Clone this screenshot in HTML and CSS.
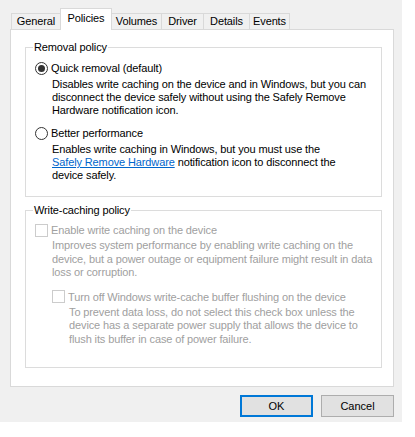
FILE: index.html
```html
<!DOCTYPE html>
<html>
<head>
<meta charset="utf-8">
<link rel="stylesheet" href="styles.css">
</head>
<body>
<div class="dialog">
  <div class="tabs">
    <div class="tab t-general">General</div>
    <div class="tab t-policies active">Policies</div>
    <div class="tab t-volumes">Volumes</div>
    <div class="tab t-driver">Driver</div>
    <div class="tab t-details">Details</div>
    <div class="tab t-events">Events</div>
  </div>
  <div class="panel">
    <fieldset class="group g-removal">
      <legend>Removal policy</legend>
      <div class="option first"><span class="radio checked"></span><span class="label">Quick removal (default)</span></div>
      <p class="desc">Disables write caching on the device and in Windows, but you can<br>disconnect the device safely without using the Safely Remove<br>Hardware notification icon.</p>
      <div class="option second"><span class="radio"></span><span class="label">Better performance</span></div>
      <p class="desc">Enables write caching in Windows, but you must use the<br><a class="link" href="#">Safely Remove Hardware</a> notification icon to disconnect the<br>device safely.</p>
    </fieldset>
    <fieldset class="group g-cache">
      <legend>Write-caching policy</legend>
      <div class="option disabled first"><span class="check"></span><span class="label">Enable write caching on the device</span></div>
      <p class="desc disabled">Improves system performance by enabling write caching on the<br>device, but a power outage or equipment failure might result in data<br>loss or corruption.</p>
      <div class="option disabled sub"><span class="check"></span><span class="label">Turn off Windows write-cache buffer flushing on the device</span></div>
      <p class="desc disabled subdesc">To prevent data loss, do not select this check box unless the<br>device has a separate power supply that allows the device to<br>flush its buffer in case of power failure.</p>
    </fieldset>
  </div>
  <div class="buttons">
    <button class="btn default">OK</button>
    <button class="btn">Cancel</button>
  </div>
</div>
</body>
</html>
```

FILE: styles.css
```css
body {
  margin: 0;
  background: #ffffff;
  font-family: "Liberation Sans", Arial, sans-serif;
  font-size: 11px;
  letter-spacing: -0.12px;
  color: #000;
}

.dialog {
  width: 402px;
  height: 422px;
  box-sizing: border-box;
  background: #f0f0f0;
  padding: 8px 8px 0 10px;
  display: flex;
  flex-direction: column;
}

.tabs {
  display: flex;
  align-items: flex-end;
  height: 22px;
  margin-bottom: -1px;
  padding-left: 1px;
  position: relative;
  z-index: 1;
}

.tab {
  box-sizing: border-box;
  height: 16px;
  line-height: 15px;
  margin-bottom: 1px;
  margin-left: -1px;
  border: 1px solid #d9d9d9;
  border-bottom: none;
  background: #f0f0f0;
  text-align: center;
  white-space: nowrap;
}

.tab.t-general { margin-left: 0; width: 50px; }
.tab.t-policies { width: 52px; }
.tab.t-volumes { width: 51px; }
.tab.t-driver { width: 43px; }
.tab.t-details { width: 47px; }
.tab.t-events { width: 41px; }

.tab.active {
  height: 22px;
  line-height: 19px;
  margin-bottom: 0;
  background: #ffffff;
  position: relative;
  z-index: 2;
}

.panel {
  box-sizing: border-box;
  width: 384px;
  height: 358px;
  background: #ffffff;
  border: 1px solid #d9d9d9;
  padding: 10px 0 0 14px;
}

.group {
  box-sizing: border-box;
  width: 357px;
  margin: 0;
  padding: 0 0 0 9px;
  border: 1px solid #dcdcdc;
}

.group legend {
  padding: 0 1px;
  margin-left: -2px;
  line-height: 14px;
  color: #000;
}

.g-removal {
  height: 157px;
}

.g-cache {
  margin-top: 6px;
  height: 165px;
}

.option {
  display: flex;
  align-items: center;
  height: 14px;
  line-height: 14px;
  white-space: nowrap;
}

.option.first { margin-top: 7px; }
.g-cache .option.first { margin-top: 6px; }
.option.second { margin-top: 9px; }
.option.sub { margin-top: 10px; margin-left: 17px; }

.radio {
  box-sizing: border-box;
  width: 13px;
  height: 13px;
  border: 1px solid #333333;
  border-radius: 50%;
  margin-right: 3px;
  display: flex;
  align-items: center;
  justify-content: center;
  background: #fff;
}

.radio.checked::after {
  content: "";
  width: 7px;
  height: 7px;
  border-radius: 50%;
  background: #333333;
}

.check {
  box-sizing: border-box;
  width: 13px;
  height: 13px;
  border: 1px solid #cccccc;
  background: #ffffff;
  margin-right: 3px;
}

.desc {
  margin: 3px 0 0 17px;
  line-height: 13px;
  white-space: nowrap;
}

.desc.disabled { margin-top: 2px; line-height: 13.5px; }
.desc.subdesc { margin-left: 34px; }

.disabled, .disabled .label {
  color: #a0a0a0;
}

.link {
  color: #0066cc;
  text-decoration: underline;
}

.buttons {
  display: flex;
  justify-content: flex-end;
  gap: 8px;
  margin-top: 8px;
  padding-right: 0;
}

.btn {
  box-sizing: border-box;
  width: 73px;
  height: 22px;
  margin: 0;
  padding: 0;
  font-family: "Liberation Sans", Arial, sans-serif;
  font-size: 11px;
  color: #000;
  background: #e1e1e1;
  border: 1px solid #adadad;
}

.btn.default {
  border: 2px solid #0078d7;
}
```
